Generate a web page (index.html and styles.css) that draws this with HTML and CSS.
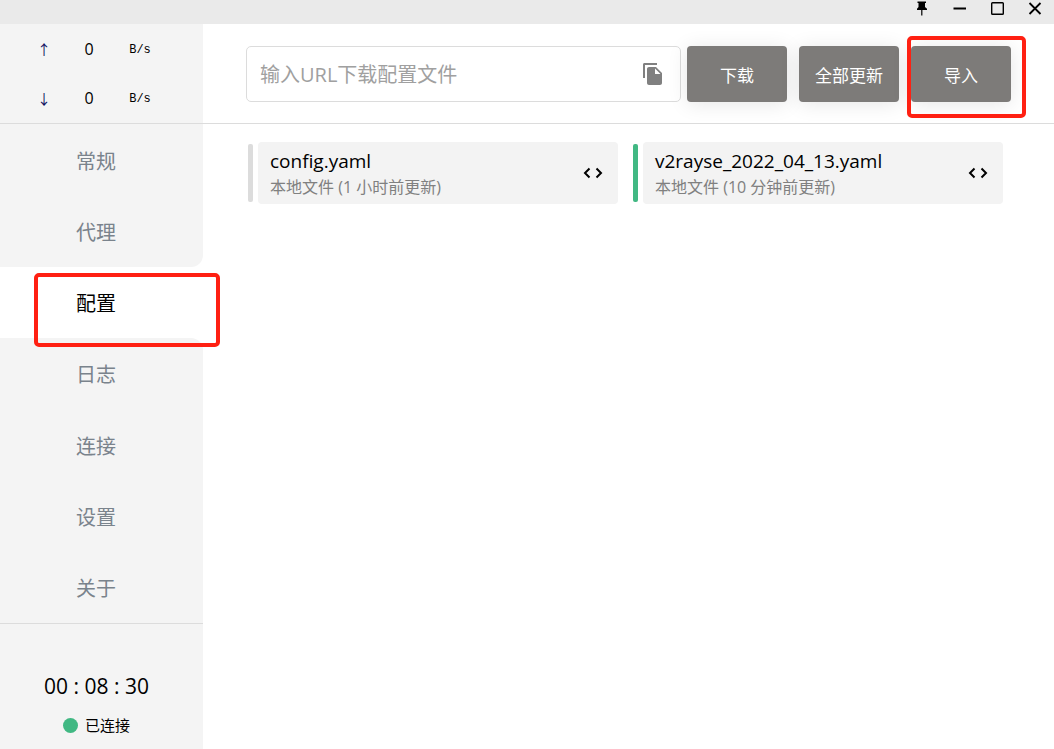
FILE: index.html
```html
<!DOCTYPE html>
<html lang="zh-CN">
<head>
<meta charset="utf-8">
<meta name="viewport" content="width=device-width, initial-scale=1">
<title>配置</title>
<link rel="stylesheet" href="styles.css">
</head>
<body>
<div class="app">
  <header class="titlebar">
    <button class="win-btn" aria-label="置顶"><svg width="16" height="16" viewBox="0 0 16 16"><path d="M4.500 1.500h8.500v1.500h-1V7l2 1.700V10H9.400v5.500H8.200V10H4V8.700L5.500 7V3h-1z"/></svg></button>
    <button class="win-btn" aria-label="最小化"><svg width="16" height="16" viewBox="0 0 16 16"><path d="M2.500 8.500H15" fill="none" stroke="#000" stroke-width="2"/></svg></button>
    <button class="win-btn" aria-label="最大化"><svg width="16" height="16" viewBox="0 0 16 16"><rect x="2.700" y="2.700" width="11.600" height="11.600" rx=".8" fill="none" stroke="#000" stroke-width="1.400"/></svg></button>
    <button class="win-btn" aria-label="关闭"><svg width="16" height="16" viewBox="0 0 16 16"><path d="M2.500 3l11 11M13.500 3l-11 11" fill="none" stroke="#000" stroke-width="1.800"/></svg></button>
  </header>
  <div class="body">
    <aside class="sidebar">
      <div class="speed">
        <div class="speed-row"><span class="arrow">↑</span><span class="value">0</span><span class="unit">B/s</span></div>
        <div class="speed-row"><span class="arrow">↓</span><span class="value">0</span><span class="unit">B/s</span></div>
      </div>
      <nav class="nav">
        <a class="nav-item" href="#general">常规</a>
        <a class="nav-item before-active" href="#proxies">代理</a>
        <a class="nav-item active" href="#profiles" aria-current="page">配置<span class="mark mark-nav"></span></a>
        <a class="nav-item after-active" href="#logs">日志</a>
        <a class="nav-item" href="#connections">连接</a>
        <a class="nav-item" href="#settings">设置</a>
        <a class="nav-item" href="#about">关于</a>
      </nav>
      <div class="status">
        <div class="clock">00 : 08 : 30</div>
        <div class="state"><span class="dot"></span>已连接</div>
      </div>
    </aside>
    <main class="main">
      <div class="toolbar">
        <div class="url-box">
          <input class="url" type="text" placeholder="输入URL下载配置文件" aria-label="输入URL下载配置文件">
          <button class="paste" aria-label="粘贴"><svg width="24" height="24" viewBox="0 0 24 24"><path d="M16 1H3.500C2.600 1 2 1.700 2 2.600V16h2V3h12z"/><path d="M15 5H8C6.900 5 6 5.900 6 7v14c0 1.100.9 2 2 2h11c1.100 0 2-.9 2-2V11zm-1 7V6.500l5.500 5.500z"/></svg></button>
        </div>
        <div class="actions">
          <button class="action">下载</button>
          <button class="action">全部更新</button>
          <button class="action">导入<span class="mark mark-import"></span></button>
        </div>
      </div>
      <div class="profiles">
        <article class="profile">
          <span class="bar"></span>
          <div class="card">
            <div class="info"><div class="name">config.yaml</div><div class="meta">本地文件 (1 小时前更新)</div></div>
            <button class="code" aria-label="编辑"><svg width="20" height="12" viewBox="0 0 20 12"><path d="M6.500 1.500L2 6l4.500 4.500M13.500 1.500L18 6l-4.500 4.500" fill="none" stroke="#000" stroke-width="2"/></svg></button>
          </div>
        </article>
        <article class="profile selected">
          <span class="bar"></span>
          <div class="card">
            <div class="info"><div class="name">v2rayse_2022_04_13.yaml</div><div class="meta">本地文件 (10 分钟前更新)</div></div>
            <button class="code" aria-label="编辑"><svg width="20" height="12" viewBox="0 0 20 12"><path d="M6.500 1.500L2 6l4.500 4.500M13.500 1.500L18 6l-4.500 4.500" fill="none" stroke="#000" stroke-width="2"/></svg></button>
          </div>
        </article>
      </div>
    </main>
  </div>
</div>
</body>
</html>
```
FILE: styles.css
```css
* { box-sizing: border-box; }
body {
  margin: 0;
  font-family: "Open Sans", "Noto Sans CJK SC", sans-serif;
  color: #000;
  background: #fff;
}
button {
  border: 0;
  padding: 0;
  background: none;
  font: inherit;
  cursor: pointer;
}
svg { display: block; }
.app { display: flex; flex-direction: column; min-height: 100vh; }
.titlebar {
  display: flex;
  justify-content: flex-end;
  align-items: flex-start;
  gap: 22px;
  height: 24px;
  padding-right: 11px;
  background: #eaeaea;
}
.body { display: flex; flex: 1; }
.sidebar {
  display: flex;
  flex-direction: column;
  flex: 0 0 203px;
  background: #f4f4f4;
}
.speed { height: 100px; border-bottom: 1px solid #dcdcdc; }
.speed-row {
  display: grid;
  grid-template-columns: 50px 40px 62px;
  justify-content: start;
  align-items: center;
  height: 49px;
  padding-left: 19px;
  text-align: center;
}
.arrow { font: 14px "Noto Sans CJK SC", sans-serif; color: #101060; }
.value { font-size: 16px; }
.unit { padding-top: 2px; font: 12px "Liberation Mono", monospace; }
.nav { display: flex; flex-direction: column; flex: 1; background: #fff; }
.nav-item {
  display: flex;
  align-items: center;
  flex: 1;
  position: relative;
  padding: 4px 0 0 76px;
  font-size: 20px;
  line-height: 28px;
  color: #7a838c;
  background: #f4f4f4;
  text-decoration: none;
}
.nav-item.active { background: #fff; color: #000; z-index: 1; }
.before-active { border-bottom-right-radius: 12px; }
.after-active { border-top-right-radius: 12px; }
.mark {
  position: absolute;
  border: 4px solid #ff2012;
  border-radius: 5px;
  pointer-events: none;
}
.mark-nav { inset: 6px -17px -9px 34px; }
.mark-import { inset: -10px -15px -16px -4px; }
.status {
  display: flex;
  flex-direction: column;
  align-items: center;
  gap: 14px;
  height: 126px;
  padding: 48px 10px 0 0;
  border-top: 1px solid #dcdcdc;
}
.clock { font-size: 21px; line-height: 28px; }
.state {
  display: flex;
  align-items: center;
  gap: 7px;
  font-size: 15px;
  line-height: 22px;
}
.dot { width: 15px; height: 15px; border-radius: 50%; background: #41b883; }
.main { flex: 1; min-width: 0; }
.toolbar {
  display: flex;
  gap: 6px;
  height: 100px;
  padding: 22px 43px;
  border-bottom: 1px solid #dcdcdc;
}
.url-box {
  display: flex;
  align-items: center;
  flex: 1;
  min-width: 0;
  height: 56px;
  padding: 0 15px 0 13px;
  border: 1px solid #dcdcdc;
  border-radius: 5px;
}
.url {
  flex: 1;
  min-width: 0;
  padding: 0;
  border: 0;
  outline: 0;
  font: inherit;
  font-size: 20px;
}
.url::placeholder { color: #a0a0a0; }
.paste { fill: #808080; }
.actions { display: flex; gap: 12px; }
.action {
  position: relative;
  width: 100px;
  height: 56px;
  border-radius: 4px;
  background: #7d7b79;
  box-shadow: 0 2px 20px rgba(0, 0, 0, 0.1);
  color: #fff;
  font-size: 17px;
}
.profiles {
  display: grid;
  grid-template-columns: repeat(2, minmax(0, 1fr));
  gap: 15px;
  padding: 18px 51px 18px 45px;
}
.profile { display: flex; align-items: center; gap: 5px; }
.bar { width: 5px; height: 58px; border-radius: 2px; background: #dcdcdc; }
.selected .bar { background: #41b883; }
.card {
  display: flex;
  align-items: center;
  justify-content: space-between;
  flex: 1;
  min-width: 0;
  height: 62px;
  padding: 0 15px 0 12px;
  border-radius: 4px;
  background: #f3f3f3;
}
.name { font-size: 19px; line-height: 28px; }
.meta { font-size: 16px; line-height: 24px; color: #808080; }
```
